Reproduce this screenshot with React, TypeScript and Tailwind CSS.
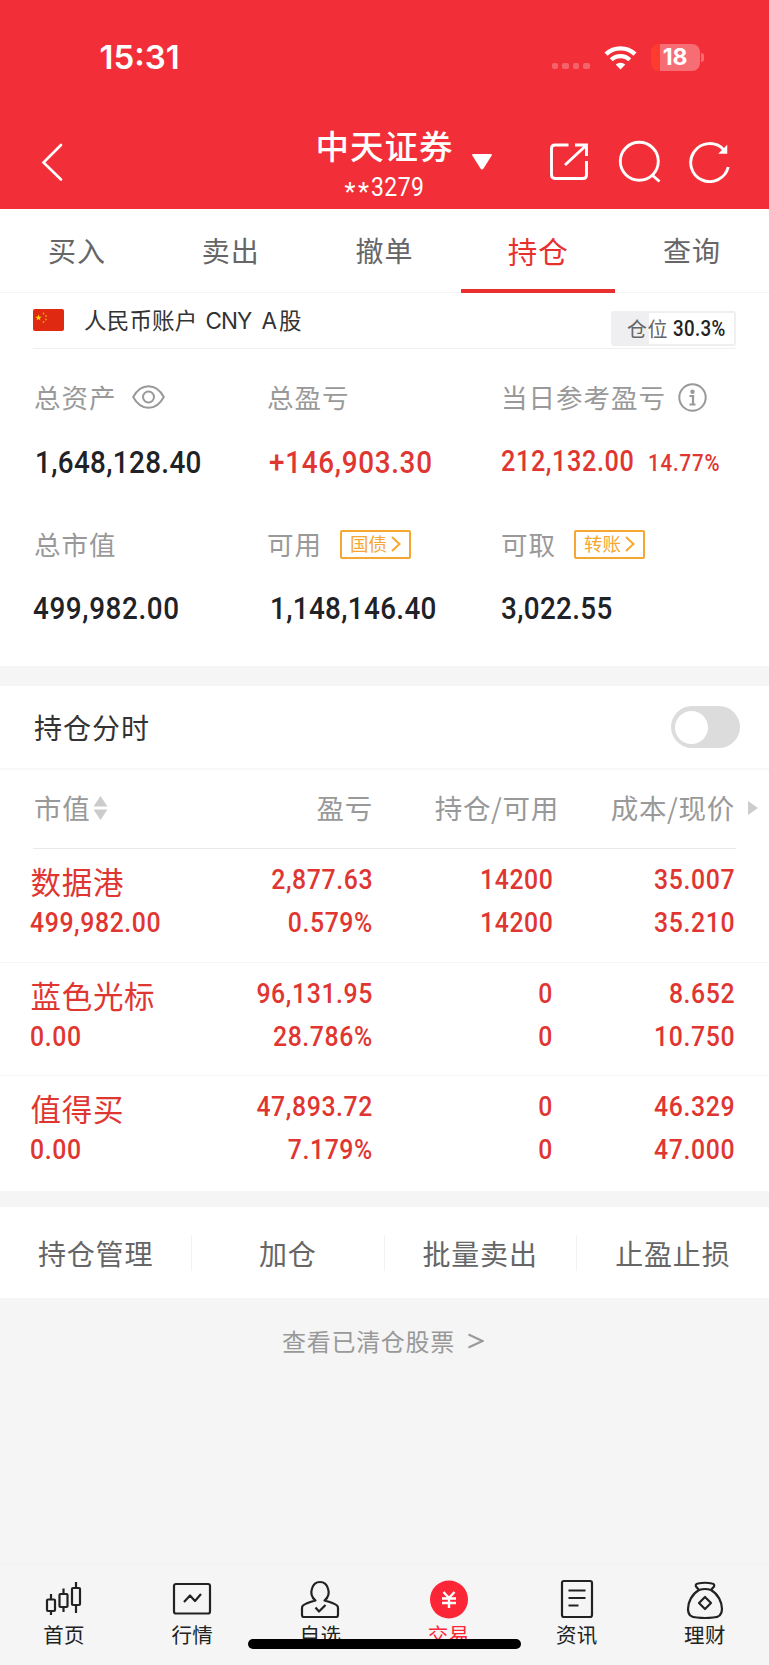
import type { ReactNode } from 'react';

const tabs = ['买入', '卖出', '撤单', '持仓', '查询'];

const holdings = [
  { name: '数据港', value: '499,982.00', profit: '2,877.63', rate: '0.579%', held: '14200', usable: '14200', cost: '35.007', price: '35.210' },
  { name: '蓝色光标', value: '0.00', profit: '96,131.95', rate: '28.786%', held: '0', usable: '0', cost: '8.652', price: '10.750' },
  { name: '值得买', value: '0.00', profit: '47,893.72', rate: '7.179%', held: '0', usable: '0', cost: '46.329', price: '47.000' },
];

const actions = ['持仓管理', '加仓', '批量卖出', '止盈止损'];

interface NumProps {
  children: ReactNode;
  right?: boolean;
  className?: string;
}

// Condensed DIN-like figures
function Num({ children, right = false, className = '' }: NumProps) {
  return (
    <span
      className={`block w-max whitespace-nowrap font-['Roboto',sans-serif] font-medium scale-x-[0.87] ${right ? '-mr-[1.2px] origin-right justify-self-end' : 'origin-left'} ${className}`}
    >
      {children}
    </span>
  );
}

function StatusBar() {
  return (
    <div className="flex h-[115px] items-center pl-[99.5px] pr-[65.5px]">
      <span className="font-['Inter',sans-serif] text-[33px] font-semibold">15:31</span>
      <div className="ml-auto flex items-center">
        <div className="mt-[17px] flex gap-1">
          {[0, 1, 2, 3].map((i) => (
            <span key={i} className="h-[6.5px] w-[6.5px] rounded-[2px] bg-white/25" />
          ))}
        </div>
        <svg className="ml-[14px]" width="33" height="25" viewBox="0 0 33 25" fill="none">
          <path d="M2 9.2A21 21 0 0 1 31 9.2" stroke="#fff" strokeWidth="4.4" />
          <path d="M7.2 14.8A13.5 13.5 0 0 1 25.8 14.8" stroke="#fff" strokeWidth="4.2" />
          <path d="M16.5 24.6L11.7 19.6A7 7 0 0 1 21.3 19.6Z" fill="#fff" />
        </svg>
        <div className="ml-[14px] flex h-[27px] w-[49px] items-center justify-center overflow-hidden rounded-[8px] bg-linear-to-r from-[#ff3b30] from-[18.5%] to-[#f76d74] to-[18.5%]">
          <span className="font-['Inter',sans-serif] text-[23px] font-bold leading-none tracking-[-0.3px]">18</span>
        </div>
        <span className="ml-[1px] h-[9px] w-[3px] rounded-r-full bg-[#f76d74]" />
      </div>
    </div>
  );
}

function NavBar() {
  return (
    <div className="flex h-[94px] pl-[41px] pr-[39px]">
      <svg className="mt-[28px]" width="24" height="40" viewBox="0 0 24 40" fill="none" stroke="#fff" strokeWidth="2.6" strokeLinecap="round">
        <path d="M20 2L2.5 19.5L20 36.5" />
      </svg>
      <div className="ml-[250px] flex w-[139px] flex-col items-center">
        <div className="mt-[6px] whitespace-nowrap text-[33.5px] font-medium leading-[48px] tracking-[1px]">中天证券</div>
        <div className="mt-[2px] flex whitespace-nowrap font-['Roboto',sans-serif] text-[25.5px] leading-[32px]">
          <span className="pt-[5px] tracking-[2.5px]">**</span>
          <span className="w-[53px] origin-left scale-x-[0.9] tracking-[0.5px]">3279</span>
        </div>
      </div>
      <svg className="ml-[17px] mt-[38px]" width="22" height="18" viewBox="0 0 22 18" fill="#fff">
        <path d="M2 1H20Q21.5 1 20.7 2.5L12.5 15.5Q11 17.5 9.5 15.5L1.3 2.5Q.5 1 2 1Z" />
      </svg>
      <svg className="ml-auto mt-[27px]" width="40" height="40" viewBox="0 0 40 40" fill="none" stroke="#fff" strokeWidth="2.9">
        <path d="M19.5 3H6Q2.5 3 2.5 6.5V32.5Q2.5 36.5 6 36.5H34Q37.5 36.5 37.5 33V19" />
        <path d="M26 3H37.5V14M36.5 4L16 23" />
      </svg>
      <svg className="ml-[29px] mt-[25px]" width="43" height="43" viewBox="0 0 43 43" fill="none" stroke="#fff" strokeWidth="2.9">
        <circle cx="21.3" cy="21.3" r="19" />
        <path d="M33.5 34.5L41.5 41.5" />
      </svg>
      <svg className="ml-[28px] mt-[25px]" width="41" height="43" viewBox="0 0 41 43" fill="none" stroke="#fff" strokeWidth="2.9">
        <path d="M34.5 9.5A19 19 0 1 0 39.2 27" />
        <path d="M37.5 6.5V13H31Z" fill="#fff" strokeWidth="1.5" />
      </svg>
    </div>
  );
}

function AccountRow() {
  return (
    <div className="ml-[33px] mr-[33px] flex h-[56px] border-b border-[#f0f0f0]">
      <svg className="mt-[16px]" width="31" height="22" viewBox="0 0 31 22">
        <rect width="31" height="22" rx="2" fill="#df2910" />
        <path d="M5.5 5.5L6.3 7.8H8.7L6.8 9.2L7.5 11.5L5.5 10.1L3.5 11.5L4.2 9.2L2.3 7.8H4.7Z" fill="#ffde00" />
        <g fill="#f39a16">
          <circle cx="10.5" cy="4.5" r=".9" />
          <circle cx="13" cy="7" r=".9" />
          <circle cx="13" cy="10.5" r=".9" />
          <circle cx="10.5" cy="13" r=".9" />
        </g>
      </svg>
      <div className="ml-[20px] mt-[8px] flex items-baseline whitespace-nowrap text-[22.5px] leading-[36px] text-[#333]">
        <span className="tracking-[0.2px]">人民币账户</span>
        <span className="ml-[8px] font-['Inter',sans-serif] tracking-[-0.9px]">CNY</span>
        <span className="ml-[10px] mr-[2px] font-['Inter',sans-serif]">A</span>
        <span>股</span>
      </div>
      <div className="ml-auto mt-[18px] flex h-[35px] w-[125px] items-center rounded-[3px] border-2 border-[#efeff1] bg-linear-to-r from-[#efeff1] from-[30%] to-white to-[30%] pl-[14px]">
        <span className="text-[20px] leading-none tracking-[0.5px] text-[#666]">仓位</span>
        <Num className="ml-[5px] text-[21.5px] leading-none tracking-[0.4px] text-[#222]">30.3%</Num>
      </div>
    </div>
  );
}

function LinkBadge({ children }: { children: ReactNode }) {
  return (
    <span className="ml-[18px] flex h-[29px] w-[71px] items-center rounded-[2px] border-2 border-[#f5a732] pb-px pl-[8px] text-[18.5px] leading-none tracking-normal text-[#f5a732]">
      {children}
      <svg className="ml-[4px] mt-px" width="10" height="16" viewBox="0 0 10 16" fill="none" stroke="#f5a732" strokeWidth="2">
        <path d="M1 1L8.5 8L1 15" />
      </svg>
    </span>
  );
}

function Summary() {
  return (
    <div className="h-[317px] pl-[34px]">
      <div className="grid h-[46px] grid-cols-[234px_233px_1fr] pt-[25px] text-[26.5px] leading-[46px] tracking-[1px] text-[#999]">
        <div className="flex h-[46px] items-center">
          总资产
          <svg className="ml-[15px]" width="33" height="24" viewBox="0 0 33 24" fill="none" stroke="#999" strokeWidth="2">
            <path d="M1.2 12Q7 1.2 16.5 1.2T31.8 12Q26 22.8 16.5 22.8T1.2 12Z" />
            <circle cx="16.5" cy="12" r="5.5" />
          </svg>
        </div>
        <div className="-ml-px">总盈亏</div>
        <div className="flex h-[46px] items-center">
          当日参考盈亏
          <svg className="ml-[12px]" width="29" height="29" viewBox="0 0 29 29" fill="none" stroke="#999" strokeWidth="2">
            <circle cx="14.5" cy="14.5" r="13.2" />
            <circle cx="14.5" cy="8.7" r="2.2" fill="#999" stroke="none" />
            <path d="M11.5 13H15V21.5M11.5 21.5H17.5" strokeWidth="2.2" />
          </svg>
        </div>
      </div>
      <div className="mt-[42px] grid h-[50px] grid-cols-[234px_233px_1fr] text-[32px] leading-[50px] tracking-[0.4px]">
        <Num className="ml-px text-[#1f2226]">1,648,128.40</Num>
        <Num className="ml-px tracking-[0.8px] text-[#e03632]">+146,903.30</Num>
        <div className="flex text-[#e03632]">
          <div className="w-[147px] shrink-0">
            <Num className="-mt-px text-[29px] tracking-[0.7px]">212,132.00</Num>
          </div>
          <Num className="pt-px text-[23.5px] tracking-[1px]">14.77%</Num>
        </div>
      </div>
      <div className="mt-[34px] grid h-[46px] grid-cols-[234px_233px_1fr] text-[26.5px] leading-[46px] tracking-[1px] text-[#999]">
        <div>总市值</div>
        <div className="-ml-px flex items-center">
          可用
          <LinkBadge>国债</LinkBadge>
        </div>
        <div className="flex items-center">
          可取
          <LinkBadge>转账</LinkBadge>
        </div>
      </div>
      <div className="mt-[16px] grid h-[50px] grid-cols-[234px_233px_1fr] text-[32px] leading-[50px] tracking-[0.4px] text-[#1f2226]">
        <Num className="-ml-px tracking-[0.7px]">499,982.00</Num>
        <Num className="ml-[2px]">1,148,146.40</Num>
        <Num>3,022.55</Num>
      </div>
    </div>
  );
}

function HoldingTable() {
  return (
    <div>
      <div className="grid h-[78px] grid-cols-[120px_253px_186px_176px_1fr] items-center pb-[2px] text-[27.5px] tracking-[0.7px] text-[#999]">
        <div className="flex items-center pl-[34px]">
          市值
          <svg className="ml-[3px]" width="15" height="24" viewBox="0 0 15 24" fill="#ccc">
            <path d="M7.5 0L14.5 10.5H.5ZM7.5 24L14.5 13.5H.5Z" />
          </svg>
        </div>
        <div className="text-right">盈亏</div>
        <div className="text-right">持仓/可用</div>
        <div className="text-right">成本/现价</div>
        <svg className="ml-[13px]" width="10" height="14" viewBox="0 0 10 14" fill="#ccc">
          <path d="M0 0L10 7L0 14Z" />
        </svg>
      </div>
      <div className="mx-[33px] h-px bg-[#e6eae9]" />
      {holdings.map((h) => (
        <div
          key={h.name}
          className="grid h-[113.5px] grid-cols-[120px_252px_180px_182px] grid-rows-[43px_43px] border-b border-[#f5f5f5] pt-[9px] text-[28.5px] leading-[43px] tracking-[0.7px] text-[#e03632] last:h-[115px] last:border-0"
        >
          <div className="whitespace-nowrap pl-[30.5px] pt-[2px] text-[30.5px]">{h.name}</div>
          <Num right>{h.profit}</Num>
          <Num right>{h.held}</Num>
          <Num right>{h.cost}</Num>
          <Num className="ml-[30px]">{h.value}</Num>
          <Num right>{h.rate}</Num>
          <Num right>{h.usable}</Num>
          <Num right>{h.price}</Num>
        </div>
      ))}
    </div>
  );
}

const navItems = [
  {
    label: '首页',
    icon: (
      <>
        <path d="M6 12V17.5M6 29V33M18.5 6.5V12M18.5 25V30M31 0V6M31 23V31" />
        <rect x="2" y="17.5" width="8" height="11.5" rx="1" />
        <rect x="14.5" y="12" width="8" height="13" rx="1" />
        <rect x="27" y="6" width="8" height="17" rx="1" />
      </>
    ),
  },
  {
    label: '行情',
    icon: (
      <>
        <rect x="1" y="2" width="36" height="29.5" rx="2" />
        <path d="M11 20L17 13.5L22 19L28 12" />
      </>
    ),
  },
  {
    label: '自选',
    icon: (
      <>
        <path d="M14.5 18.5C9 14 10.5 8 11 6.5C12.5 1.5 15.5 0 19 0S25.5 1.5 27 6.5C27.5 8 29 14 23.5 18.5Q33 21 36 23.5Q37 24.5 37 26V33Q37 35 35 35H3Q1 35 1 33V26Q1 24.5 2 23.5Q5 21 14.5 18.5Z" />
        <path d="M14.5 25.5L18 29.5L24.5 23" />
      </>
    ),
  },
  {
    label: '交易',
    icon: (
      <>
        <circle cx="19" cy="17.5" r="19" fill="#fd2637" stroke="none" />
        <path d="M13.5 10L19 16L24.5 10M12 16.5H26M12 21H26M19 16V26" stroke="#fff" strokeWidth="2.4" />
      </>
    ),
  },
  {
    label: '资讯',
    icon: (
      <>
        <rect x="4" y="-1" width="30" height="36" rx="2" />
        <path d="M10.5 8.5H27.5M10.5 16H27.5M10.5 23.5H20.5" />
      </>
    ),
  },
  {
    label: '理财',
    icon: (
      <>
        <path d="M13 8L10 4.5Q9 2 12 1.5Q19 0 26 1.5Q29 2 28 4.5L25 8" />
        <path d="M13 8Q19 6 25 8C32 12 36 20 36 27C36 33 33 35.5 27 35.5Q19 36.5 11 35.5C5 35.5 2 33 2 27C2 20 6 12 13 8Z" />
        <path d="M19 15L25 21L19 27L13 21Z" />
      </>
    ),
  },
];

function BottomNav() {
  return (
    <div className="relative grid h-[101px] grid-cols-6 border-t border-[#f2f2f2]">
      {navItems.map((item) => (
        <div key={item.label} className={`flex flex-col items-center pt-[16px] ${item.label === '交易' ? 'text-[#fd2637]' : 'text-[#222]'}`}>
          <svg className="overflow-visible" width="38" height="38" viewBox="0 -1 38 38" fill="none" stroke="#222" strokeWidth="2.2" strokeLinejoin="round">
            {item.icon}
          </svg>
          <span className="mt-px text-[20.5px] leading-[28px] tracking-[0.3px]">{item.label}</span>
        </div>
      ))}
      <div className="absolute left-[248px] top-[74px] h-[10px] w-[273px] rounded-full bg-black" />
    </div>
  );
}

export default function App() {
  return (
    <div className="flex h-[1665px] w-[769px] flex-col overflow-hidden bg-[#f5f5f5] font-['Noto_Sans_CJK_SC',sans-serif]">
      <header className="h-[209px] bg-[#f22f38] text-white">
        <StatusBar />
        <NavBar />
      </header>

      <div className="bg-white">
        <div className="grid h-[84px] grid-cols-5 border-b border-[#f4f4f4]">
          {tabs.map((tab) => (
            <div
              key={tab}
              className={`h-[84px] border-b-4 pt-[3px] text-center leading-[76px] tracking-[1px] ${
                tab === '持仓' ? 'border-[#e8312f] text-[29.5px] text-[#e8312f]' : 'border-transparent text-[28px] text-[#666]'
              }`}
            >
              {tab}
            </div>
          ))}
        </div>
        <AccountRow />
        <Summary />
      </div>

      <div className="mt-[20px] bg-white">
        <div className="flex h-[84px] items-center border-b-2 border-[#f8f8f8] pl-[34px] pr-[29px]">
          <span className="text-[28px] tracking-[1px] text-[#333]">持仓分时</span>
          <button className="ml-auto flex h-[42px] w-[69px] items-center rounded-full bg-[#dcdcdc] pl-[4px]">
            <span className="h-[33px] w-[33px] rounded-full bg-white" />
          </button>
        </div>
        <HoldingTable />
      </div>

      <div className="mt-[16px] grid h-[91px] grid-cols-4 items-center bg-white text-center text-[28px] tracking-[0.8px] text-[#666]">
        {actions.map((action) => (
          <div key={action} className="border-r border-[#f2f2f2] leading-[36px] last:border-0">
            {action}
          </div>
        ))}
      </div>

      <div className="mt-[25px] flex items-center justify-center pr-[3px] text-[24px] leading-[36px] tracking-[0.7px] text-[#999]">
        查看已清仓股票
        <svg className="ml-[13px]" width="16" height="16" viewBox="0 0 16 16" fill="none" stroke="#999" strokeWidth="2">
          <path d="M.5 1.5L14.5 8L.5 14.5" />
        </svg>
      </div>

      <div className="mt-auto">
        <BottomNav />
      </div>
    </div>
  );
}
